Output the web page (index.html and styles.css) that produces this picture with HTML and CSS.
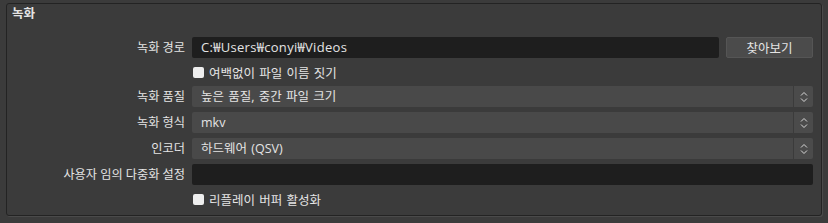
FILE: index.html
```html
<!DOCTYPE html>
<html lang="ko">
<head>
    <meta charset="UTF-8">
    <title>녹화 설정</title>
    <link rel="stylesheet" href="styles.css">
</head>
<body>
    <div class="group">
        <div class="group-title">녹화</div>
        <div class="form">
            <label class="label">녹화 경로</label>
            <div class="path-row">
                <div class="input">C:₩Users₩conyi₩Videos</div>
                <button class="browse">찾아보기</button>
            </div>

            <div></div>
            <div class="check"><span class="box"></span>여백없이 파일 이름 짓기</div>

            <label class="label">녹화 품질</label>
            <div class="combo"><span class="value">높은 품질, 중간 파일 크기</span><span class="spin"><svg width="8" height="12" viewBox="0 0 8 12"><path d="M1 4.5 L4 1.5 L7 4.5 M1 7.5 L4 10.5 L7 7.5" fill="none" stroke="#d8d8d8" stroke-width="1"/></svg></span></div>

            <label class="label">녹화 형식</label>
            <div class="combo"><span class="value">mkv</span><span class="spin"><svg width="8" height="12" viewBox="0 0 8 12"><path d="M1 4.5 L4 1.5 L7 4.5 M1 7.5 L4 10.5 L7 7.5" fill="none" stroke="#d8d8d8" stroke-width="1"/></svg></span></div>

            <label class="label">인코더</label>
            <div class="combo"><span class="value">하드웨어 (QSV)</span><span class="spin"><svg width="8" height="12" viewBox="0 0 8 12"><path d="M1 4.5 L4 1.5 L7 4.5 M1 7.5 L4 10.5 L7 7.5" fill="none" stroke="#d8d8d8" stroke-width="1"/></svg></span></div>

            <label class="label">사용자 임의 다중화 설정</label>
            <div class="input"></div>

            <div></div>
            <div class="check"><span class="box"></span>리플레이 버퍼 활성화</div>
        </div>
    </div>
</body>
</html>
```

FILE: styles.css
```css
/* pannello impostazioni registrazione, tema scuro */
html, body {
    margin: 0;
    padding: 0;
    background: #3b3b3b;
    color: #e4e4e4;
    font-family: "Open Sans", "Noto Sans CJK KR", sans-serif;
    font-size: 12px;
}

body {
    padding: 3px 6px 0 6px;
    height: 223px;
    box-sizing: border-box;
}

.group {
    height: 213px;
    box-sizing: border-box;
    border: 1px solid #232323;
    border-radius: 3px;
    box-shadow: 1px 1px 0 #4a4a4a;
    padding: 2px 8px 0 5px;
}

.group-title {
    font-weight: bold;
    font-size: 12.5px;
    line-height: 16px;
    height: 31px;
}

.form {
    display: grid;
    grid-template-columns: 173px 1fr;
    grid-template-rows: 21px 18px 21px 21px 21px 21px 18px;
    column-gap: 7px;
    row-gap: 5px;
    align-items: center;
}

.label {
    text-align: right;
    white-space: nowrap;
    line-height: 16px;
    font-size: 12.2px;
}

.path-row {
    display: flex;
    gap: 7px;
    height: 21px;
}

.input {
    flex: 1;
    height: 21px;
    box-sizing: border-box;
    background: #1e1e1e;
    border-radius: 2px;
    padding: 0 9px;
    line-height: 21px;
    font-size: 13px;
    letter-spacing: 0.3px;
}

.browse {
    width: 87px;
    height: 21px;
    border: 1px solid #555;
    border-radius: 2px;
    background: #4b4b4b;
    color: #e4e4e4;
    font-family: inherit;
    font-size: 12.5px;
    padding: 0;
}

.check {
    display: flex;
    align-items: center;
    gap: 5px;
    padding-left: 1px;
    font-size: 12.5px;
    word-spacing: 1px;
}

.box {
    width: 11px;
    height: 11px;
    border-radius: 2px;
    background: #eeeeee;
}

.combo {
    display: flex;
    height: 21px;
    border-radius: 2px;
    overflow: hidden;
}

.value {
    flex: 1;
    background: #494949;
    padding: 0 9px;
    line-height: 21px;
    font-size: 12.5px;
    word-spacing: 1px;
}

.spin {
    width: 19px;
    margin-left: 1px;
    background: #4b4b4b;
    display: flex;
    align-items: center;
    justify-content: center;
}
```
